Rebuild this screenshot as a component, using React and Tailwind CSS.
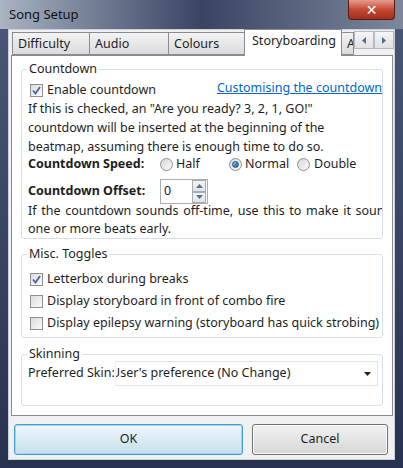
import React from "react";

const font = { fontFamily: '"Noto Sans", "Liberation Sans", sans-serif' };

function CheckBox({ checked }) {
  return (
    <span className="w-[13px] h-[13px] shrink-0 border border-[#8e8f8f] bg-gradient-to-br from-[#dcdcdc] to-[#fbfbfb] flex items-center justify-center">
      {checked && (
        <svg width="9" height="9" viewBox="0 0 9 9">
          <path d="M1 4.5 L3.5 7.5 L8 1" fill="none" stroke="#4c61a0" strokeWidth="1.8" />
        </svg>
      )}
    </span>
  );
}

function Radio({ checked }) {
  return (
    <span className="w-[13px] h-[13px] shrink-0 rounded-full border border-[#8e8f8f] bg-gradient-to-br from-[#d6d6d6] to-[#fbfbfb] flex items-center justify-center">
      {checked && <span className="w-[7px] h-[7px] rounded-full bg-gradient-to-br from-[#8ac4ec] to-[#17599a] border border-[#1b5c8f]" />}
    </span>
  );
}

function Tab({ label, width }) {
  return (
    <div
      className={`h-[23px] mt-[2px] shrink-0 border border-[#898c95] -ml-px bg-gradient-to-b from-[#f3f3f3] to-[#dbdbdb] text-[12.5px] leading-[21px] pl-[5px] text-[#1e1e1e] overflow-hidden whitespace-nowrap ${width}`}
    >
      {label}
    </div>
  );
}

function Group({ title, className, children }) {
  return (
    <fieldset className={`mx-[9px] min-w-0 border border-[#d5dfe5] rounded-[3px] ${className}`}>
      <legend className="ml-[5px] px-[2px] text-[12.5px] leading-[16px] text-[#1e1e1e]">{title}</legend>
      {children}
    </fieldset>
  );
}

export default function App() {
  return (
    <div
      className="w-[403px] h-[468px] overflow-hidden flex flex-col bg-gradient-to-b from-[#4b5878] to-[#27324f]"
      style={font}
    >
      {/* title bar */}
      <div className="h-[29px] shrink-0 flex items-start bg-gradient-to-r from-[#aab4c3] via-[#3a4563] to-[#7e879b]">
        <div className="pl-[9px] pt-[5px] text-[13px] leading-[18px] text-[#111]">Song Setup</div>
        <div className="ml-auto mr-[8px] w-[47px] h-[20px] shrink-0 rounded-b-[4px] border border-[#5a1a14] border-t-0 bg-gradient-to-b from-[#e59a8c] via-[#c44a36] to-[#a52b1b] flex items-center justify-center">
          <span className="text-white font-bold text-[14px] leading-none" style={{ fontFamily: '"DejaVu Sans", sans-serif' }}>
            ✕
          </span>
        </div>
      </div>

      {/* client */}
      <div className="mx-[8px] h-[431px] shrink-0 bg-[#f0f0f0] border border-[#c9d0da] flex flex-col">
        {/* tab strip */}
        <div className="h-[25px] shrink-0 flex pl-[3px]">
          <Tab label="Difficulty" width="w-[78px] ml-0" />
          <Tab label="Audio" width="w-[80px]" />
          <Tab label="Colours" width="w-[77px]" />
          <div className="w-[98px] h-[27px] shrink-0 -mt-[1px] -ml-px border border-[#898c95] border-b-0 bg-white text-[12.5px] leading-[22px] pl-[7px] text-[#1e1e1e] z-10">
            Storyboarding
          </div>
          <Tab label="Advanced" width="w-[13px]" />
          <div className="flex mt-[1px] shrink-0">
            {["M4 0 L0 3.5 L4 7 Z", "M0 0 L4 3.5 L0 7 Z"].map((d) => (
              <div
                key={d}
                className="w-[20px] h-[18px] border border-[#b5b9c0] bg-gradient-to-b from-[#f5f5f5] to-[#e1e1e1] flex items-center justify-center"
              >
                <svg width="4" height="7" viewBox="0 0 4 7">
                  <path d={d} fill="#4c6a9a" />
                </svg>
              </div>
            ))}
          </div>
        </div>

        {/* tab page */}
        <div className="ml-[2px] mr-[1px] h-[361px] shrink-0 bg-white border border-[#898c95] flex flex-col text-[12.5px] text-[#1e1e1e]">
          <Group title="Countdown" className="mt-[5px] pb-0">
            <div className="flex items-center h-[17px] mt-[5px] pl-[8px]">
              <CheckBox checked />
              <span className="ml-[4px] shrink-0">Enable countdown</span>
              <span className="ml-auto -mt-[4px] shrink-0 text-[#0066cc] underline">Customising the countdown</span>
            </div>
            <div className="pl-[6px] leading-[19px]">
              If this is checked, an "Are you ready? 3, 2, 1, GO!"
              <br />
              countdown will be inserted at the beginning of the
              <br />
              beatmap, assuming there is enough time to do so.
            </div>
            <div className="flex items-center h-[17px] pl-[6px]">
              <span className="font-bold w-[132px] shrink-0">Countdown Speed:</span>
              <Radio />
              <span className="ml-[3px] w-[53px] shrink-0">Half</span>
              <Radio checked />
              <span className="ml-[3px] w-[52px] shrink-0">Normal</span>
              <Radio />
              <span className="ml-[4px] shrink-0">Double</span>
            </div>
            <div className="flex items-center h-[25px] mt-[6px] pl-[6px]">
              <span className="font-bold w-[132px] shrink-0">Countdown Offset:</span>
              <div className="w-[48px] h-[25px] shrink-0 border border-[#abadb3] flex items-center">
                <span className="pl-[3px] flex-1">0</span>
                <div className="w-[14px] h-[23px] flex flex-col mr-px">
                  {["M0 4 L3.5 0 L7 4 Z", "M0 0 L3.5 4 L7 0 Z"].map((d) => (
                    <div
                      key={d}
                      className="flex-1 border border-[#a7aab0] bg-gradient-to-b from-[#f4f4f4] to-[#dfe4ea] flex items-center justify-center"
                    >
                      <svg width="7" height="4" viewBox="0 0 7 4">
                        <path d={d} fill="#5a6d92" />
                      </svg>
                    </div>
                  ))}
                </div>
              </div>
            </div>
            <div className="pl-[6px] leading-[18px] -mt-[2px]">
              <div className="whitespace-nowrap overflow-hidden [word-spacing:1.4px]">
                If the countdown sounds off-time, use this to make it sound
              </div>
              <div>one or more beats early.</div>
            </div>
          </Group>

          <Group title="Misc. Toggles" className="mt-[7px] pt-[6px] pb-[3px]">
            {[
              ["Letterbox during breaks", true],
              ["Display storyboard in front of combo fire", false],
              ["Display epilepsy warning (storyboard has quick strobing)", false],
            ].map(([label, on]) => (
              <div key={label} className="flex items-center h-[22px] pl-[8px]">
                <CheckBox checked={on} />
                <span className="ml-[4px] whitespace-nowrap">{label}</span>
              </div>
            ))}
          </Group>

          <Group title="Skinning" className="mt-[8px] pb-[19px]">
            <div className="flex items-center -mt-px pl-[6px]">
              <span className="w-[87px] shrink-0 whitespace-nowrap">Preferred Skin:</span>
              <div className="w-[263px] h-[25px] shrink-0 border border-[#e3e3e3] border-l-[#f0f0f0] flex items-center overflow-hidden">
                <span className="-ml-[5px] flex-1 whitespace-nowrap">User's preference (No Change)</span>
                <svg width="7" height="4" viewBox="0 0 7 4" className="mr-[6px] shrink-0">
                  <path d="M0 0 L7 0 L3.5 4 Z" fill="#1e1e1e" />
                </svg>
              </div>
            </div>
          </Group>
        </div>

        {/* buttons */}
        <div className="flex mt-[8px] pl-[5px] gap-[9px] text-[12.5px] text-[#1e1e1e]">
          <button
            type="button"
            className="w-[229px] h-[31px] shrink-0 rounded-[3px] border border-[#3c9ed5] shadow-[inset_0_0_0_1px_#9ed6f5] bg-gradient-to-b from-[#eef6fb] to-[#c7dfec]"
          >
            OK
          </button>
          <button
            type="button"
            className="w-[136px] h-[31px] shrink-0 rounded-[3px] border border-[#707070] shadow-[inset_0_0_0_1px_#fbfbfb] bg-gradient-to-b from-[#f2f2f2] to-[#d6d6d6]"
          >
            Cancel
          </button>
        </div>
      </div>
    </div>
  );
}
